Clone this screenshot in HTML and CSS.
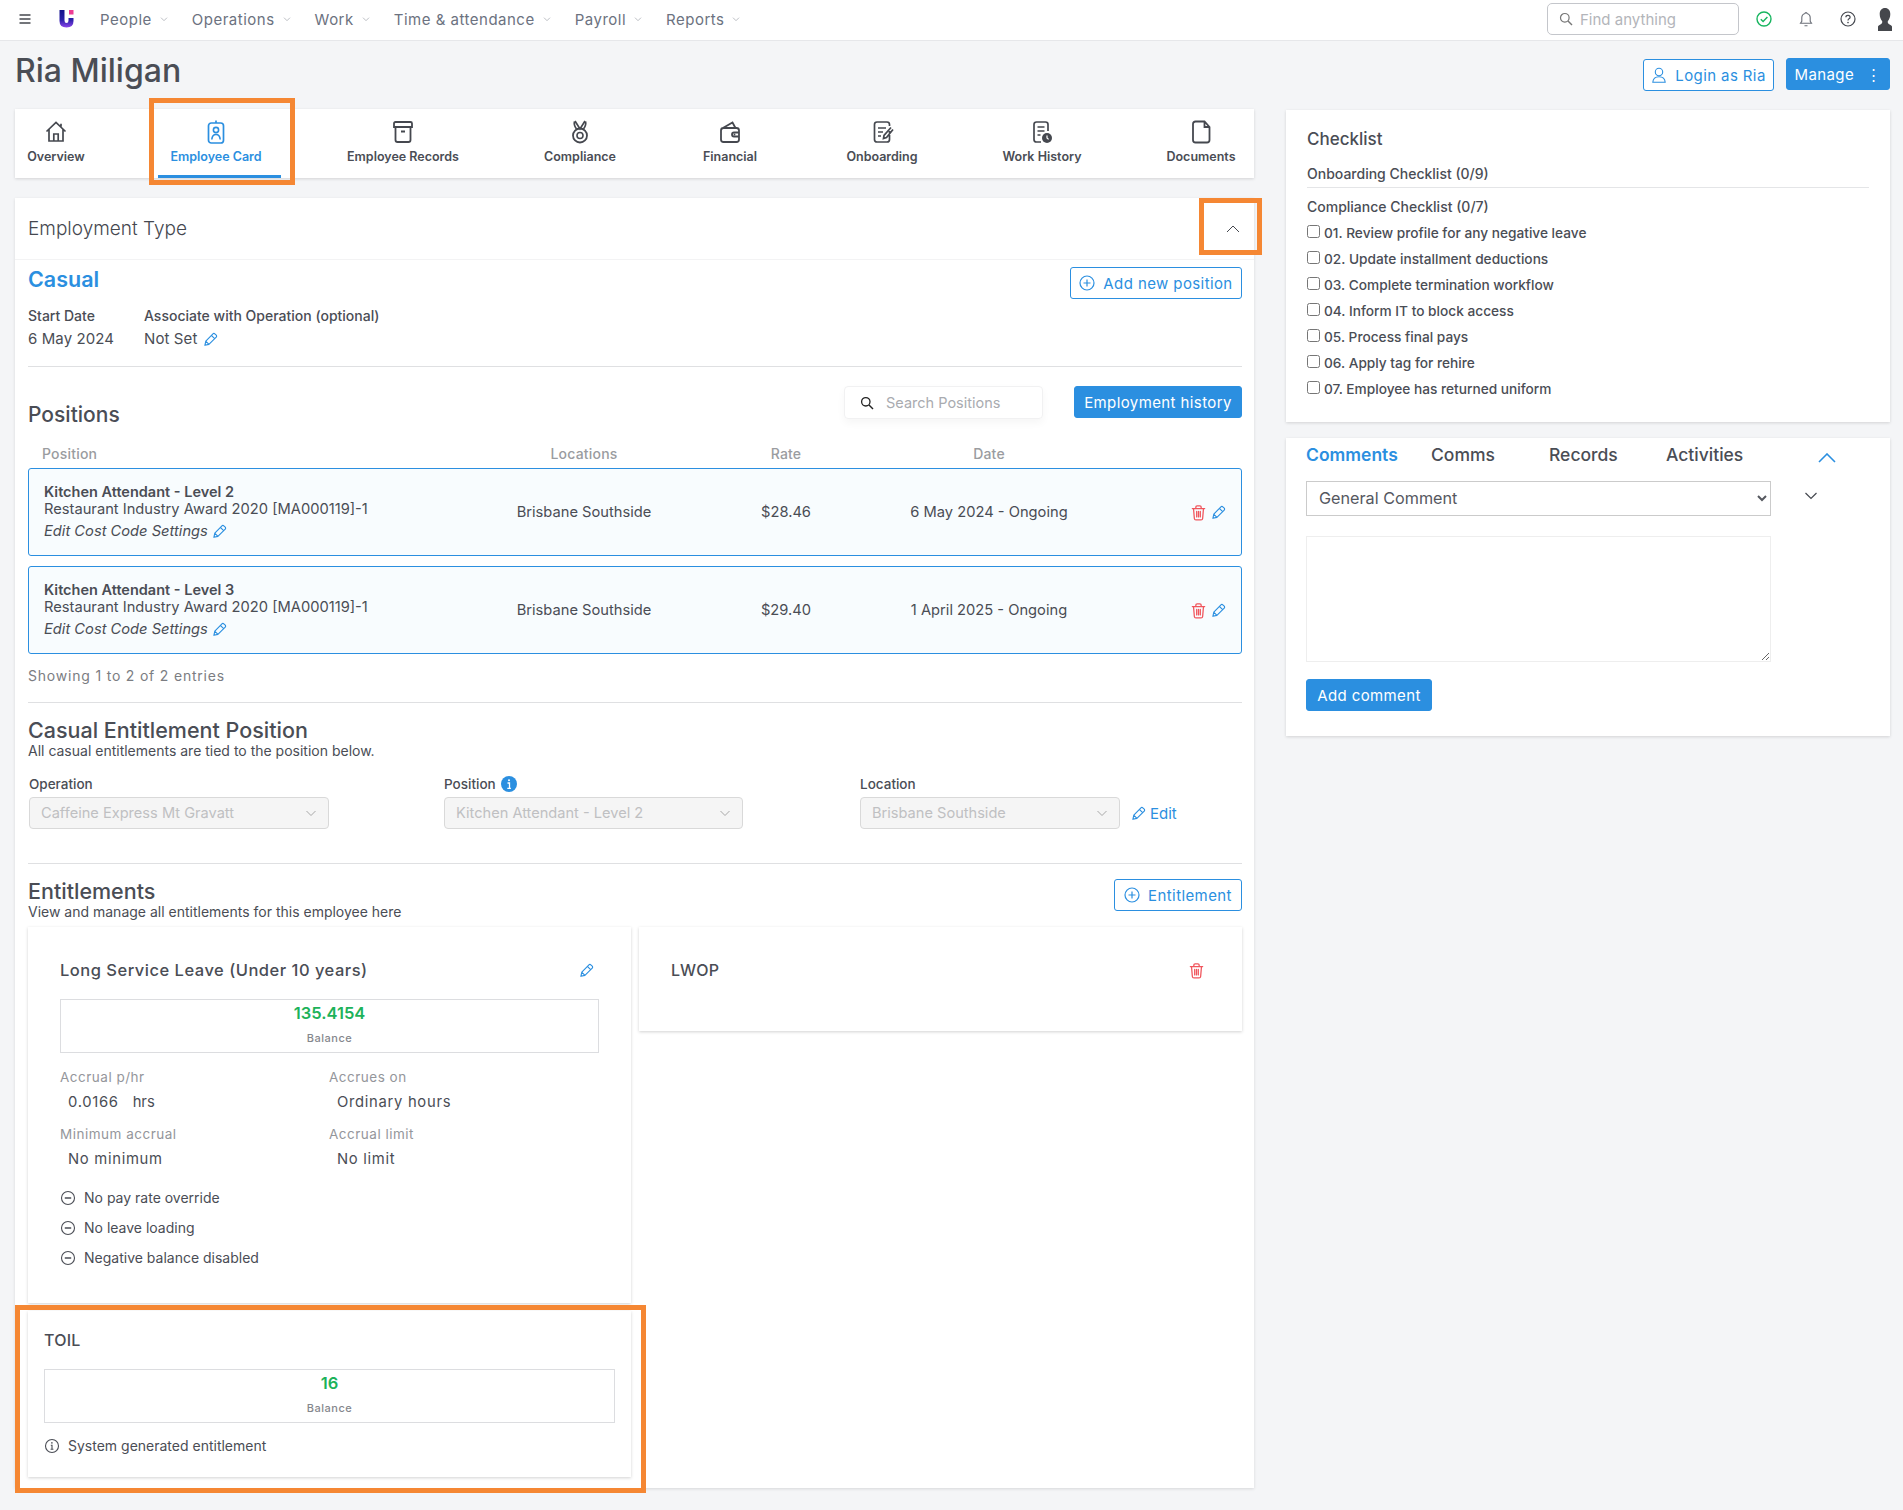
FILE: index.html
```html
<!DOCTYPE html>
<html lang="en">
<head>
    <meta charset="UTF-8">
    <meta name="viewport" content="width=device-width, initial-scale=1.0">
    <title>Ria Miligan</title>
    <link rel="stylesheet" href="styles.css">
</head>
<body>
    <svg class="defs" aria-hidden="true">
        <symbol id="pencil" viewBox="0 0 16 16"><path d="M10.6 1.900a1.400 1.400 0 0 1 2 0l1.500 1.500a1.400 1.400 0 0 1 0 2l-7.800 7.800-4.300 1 1-4.500z M8.900 3.600l3.500 3.500 M3.100 9.900l3 3" fill="none" stroke="currentColor" stroke-width="1.200" stroke-linejoin="round"/></symbol>
        <symbol id="trash" viewBox="0 0 16 16"><path d="M2.200 4.300h11.600 M5.500 4.200V2.900q0-1.200 1.200-1.200h2.600q1.200 0 1.200 1.200v1.300 M3.300 4.300l.8 9.300q.1 1.400 1.500 1.400h4.800q1.400 0 1.500-1.400l.8-9.300 M6.300 7v5.200 M8 7v5.200 M9.700 7v5.200" fill="none" stroke="currentColor" stroke-width="1.200" stroke-linecap="round"/></symbol>
        <symbol id="plus-circle" viewBox="0 0 16 16"><circle cx="8" cy="8" r="7" fill="none" stroke="currentColor" stroke-width="1.200"/><path d="M8 4.500v7 M4.500 8h7" fill="none" stroke="currentColor" stroke-width="1.200"/></symbol>
        <symbol id="minus-circle" viewBox="0 0 16 16"><circle cx="8" cy="8" r="6.500" fill="none" stroke="currentColor" stroke-width="1.100"/><path d="M4.800 8h6.400" fill="none" stroke="currentColor" stroke-width="1.500"/></symbol>
        <symbol id="info-circle" viewBox="0 0 16 16"><circle cx="8" cy="8" r="6.500" fill="none" stroke="currentColor" stroke-width="1.100"/><path d="M6.800 7.300H8v4 M6.600 11.300h2.800" fill="none" stroke="currentColor" stroke-width="1.100"/><circle cx="7.900" cy="4.900" r=".8" fill="currentColor"/></symbol>
        <symbol id="chevron" viewBox="0 0 12 12"><path d="M1.500 4l4.500 4.500L10.500 4" fill="none" stroke="currentColor" stroke-width="1"/></symbol>
    </svg>

    <header class="topbar">
        <svg class="burger" viewBox="0 0 14 12"><path d="M1.500 2h11 M1.500 6h11 M1.500 10h11" stroke="#45484f" stroke-width="1.600" fill="none"/></svg>
        <svg class="logo" viewBox="0 0 15 18">
            <defs><linearGradient id="logo-grad" x1="0" y1="0" x2="0" y2="1"><stop offset="0" stop-color="#12128a"/><stop offset=".55" stop-color="#2a1fa8"/><stop offset="1" stop-color="#8b45ea"/></linearGradient></defs>
            <path d="M.5 0h5v10.500q0 2.500 2 2.500t2-2.500V8h5v3q0 6.500-7 6.500t-7-6.500z" fill="url(#logo-grad)"/>
            <rect x="10" y="0" width="4.500" height="4.500" fill="#ee3c93"/>
        </svg>
        <nav class="mainnav">
            <a class="nav-item">People <svg class="nav-arrow"><use href="#chevron"/></svg></a>
            <a class="nav-item">Operations <svg class="nav-arrow"><use href="#chevron"/></svg></a>
            <a class="nav-item">Work <svg class="nav-arrow"><use href="#chevron"/></svg></a>
            <a class="nav-item">Time &amp; attendance <svg class="nav-arrow"><use href="#chevron"/></svg></a>
            <a class="nav-item">Payroll <svg class="nav-arrow"><use href="#chevron"/></svg></a>
            <a class="nav-item">Reports <svg class="nav-arrow"><use href="#chevron"/></svg></a>
        </nav>
        <div class="top-right">
            <div class="find-box">
                <svg class="find-icon" viewBox="0 0 14 14"><circle cx="5.800" cy="5.800" r="4.300" fill="none" stroke="#777" stroke-width="1.200"/><path d="M9 9l4 4" stroke="#777" stroke-width="1.400"/></svg>
                <span>Find anything</span>
            </div>
            <svg class="status-icon" viewBox="0 0 16 16"><circle cx="8" cy="8" r="7" fill="none" stroke="#17b55f" stroke-width="1.400"/><path d="M4.800 8.200l2.300 2.300 4.300-4.600" fill="none" stroke="#17b55f" stroke-width="1.400"/></svg>
            <svg class="status-icon gap-wide" viewBox="0 0 16 16"><path d="M8 1.500a1 1 0 0 1 1 1q3.200.8 3.200 4.300v3.500l1.300 2H2.500l1.300-2V6.800Q3.800 3.300 7 2.500a1 1 0 0 1 1-1z M6.500 14.700h3" fill="none" stroke="#6b6f78" stroke-width="1.100"/></svg>
            <svg class="status-icon gap-wide" viewBox="0 0 16 16"><circle cx="8" cy="8" r="7" fill="none" stroke="#45484f" stroke-width="1.200"/><path d="M5.900 6.300q0-2 2.100-2t2.100 1.900q0 1-1.100 1.600-1 .6-1 1.600" fill="none" stroke="#45484f" stroke-width="1.200"/><circle cx="8" cy="11.600" r=".8" fill="#45484f"/></svg>
            <svg class="avatar" viewBox="0 0 14 23"><path d="M7 0c3.300 0 5.300 2.500 5.300 6 0 3-1 5.500-2.500 7.200-.4 1.500.4 2.700 2.200 3.500 1.300.6 2 1.200 2 2V23H0v-4.300c0-.8.700-1.400 2-2 1.800-.8 2.600-2 2.200-3.500C2.700 11.500 1.700 9 1.700 6 1.700 2.500 3.700 0 7 0z" fill="#45474c"/></svg>
        </div>
    </header>

    <div class="page">
        <div class="title-row">
            <h1>Ria Miligan</h1>
            <div class="title-actions">
                <button class="btn btn-outline btn-login">
                    <svg class="btn-icon" viewBox="0 0 16 16"><circle cx="8" cy="5" r="3.700" fill="none" stroke="currentColor" stroke-width="1.100"/><path d="M1.800 15.200q.4-5.500 6.200-5.500t6.200 5.500z" fill="none" stroke="currentColor" stroke-width="1.100"/></svg>
                    Login as Ria
                </button>
                <button class="btn btn-solid btn-manage">Manage <span class="dots">&#8942;</span></button>
            </div>
        </div>

        <div class="columns">
            <main class="main-col">
                <div class="tabs">
                    <a class="tab tab-1">
                        <svg viewBox="0 0 24 24"><path d="M2.500 11.500L12 2.500l9.500 9 M5 9.500V21h14V9.500 M9.800 21v-7h4.400v7 M17 6.500V3.800" fill="none" stroke="#45484f" stroke-width="1.700"/></svg>
                        <span>Overview</span>
                    </a>
                    <a class="tab tab-2 active">
                        <svg viewBox="0 0 24 24"><rect x="4.500" y="3" width="15" height="20" rx="2.800" fill="none" stroke="#2b8fe0" stroke-width="1.700"/><path d="M12 .5V3" stroke="#2b8fe0" stroke-width="1.700"/><circle cx="12" cy="10" r="2.600" fill="none" stroke="#2b8fe0" stroke-width="1.600"/><path d="M7.800 19.500q.4-5 4.200-5t4.200 5" fill="none" stroke="#2b8fe0" stroke-width="1.600"/></svg>
                        <span>Employee Card</span>
                    </a>
                    <a class="tab tab-3">
                        <svg viewBox="0 0 24 24"><path d="M3 3.500q0-1.500 1.500-1.500h15Q21 2 21 3.500V7H3z M4.500 7v13q0 2 2 2h11q2 0 2-2V7 M10 11.500h4" fill="none" stroke="#45484f" stroke-width="1.800"/></svg>
                        <span>Employee Records</span>
                    </a>
                    <a class="tab tab-4">
                        <svg viewBox="0 0 24 24"><path d="M7 1l5 8 5-8 M6.500 1.500q-1 3.500 2 7.500 M17.500 1.500q1 3.500-2 7.500" fill="none" stroke="#45484f" stroke-width="1.700"/><circle cx="12" cy="15.500" r="7" fill="none" stroke="#45484f" stroke-width="1.800"/><circle cx="12" cy="15.500" r="3" fill="none" stroke="#45484f" stroke-width="1.600"/></svg>
                        <span>Compliance</span>
                    </a>
                    <a class="tab tab-5">
                        <svg viewBox="0 0 24 24"><path d="M3 10.500Q3 8 5.500 8h13Q21 8 21 10.500v9q0 2.500-2.500 2.500h-13Q3 22 3 19.500z M4 8.500l10.500-6 3 5.500 M21 12.500h-5q-2 0-2 2t2 2h5" fill="none" stroke="#45484f" stroke-width="1.800"/><circle cx="16.500" cy="14.500" r=".9" fill="#45484f"/></svg>
                        <span>Financial</span>
                    </a>
                    <a class="tab tab-6">
                        <svg viewBox="0 0 24 24"><path d="M19.500 11v8.500q0 2.500-2.500 2.500H7q-2.500 0-2.500-2.500v-15Q4.500 2 7 2h10q2.500 0 2.500 2.500V6 M8 8h8 M8 12h5 M8 16h3 M21 7.500l-7 8-.5 3 3-1 6.500-8" fill="none" stroke="#45484f" stroke-width="1.700"/></svg>
                        <span>Onboarding</span>
                    </a>
                    <a class="tab tab-7">
                        <svg viewBox="0 0 24 24"><path d="M18 11V4.500Q18 2 15.500 2h-9Q4 2 4 4.500v15Q4 22 6.500 22H11 M7.500 7h7 M7.500 11h7 M7.500 15h3" fill="none" stroke="#45484f" stroke-width="1.700"/><circle cx="17" cy="18" r="5" fill="#45484f"/><path d="M17 15.500V18l1.600 1.400" fill="none" stroke="#fff" stroke-width="1.200"/></svg>
                        <span>Work History</span>
                    </a>
                    <a class="tab tab-8">
                        <svg viewBox="0 0 24 24"><path d="M6.500 1.500h9l5 5.500v13q0 2.500-2.500 2.500H6.500Q4 22.500 4 20V4q0-2.500 2.500-2.500z M15.500 1.500V7h5" fill="none" stroke="#45484f" stroke-width="1.800"/></svg>
                        <span>Documents</span>
                    </a>
                </div>

                <section class="main-card">
                    <div class="card-head">
                        <h2 class="card-head-title">Employment Type</h2>
                        <svg class="head-chevron" viewBox="0 0 14 8"><path d="M1 7l6-6 6 6" fill="none" stroke="#45484f" stroke-width="1"/></svg>
                    </div>
                    <div class="card-body">
                        <div class="casual-row">
                            <div class="casual-title">Casual</div>
                            <button class="btn btn-outline btn-add"><svg class="btn-icon"><use href="#plus-circle"/></svg>Add new position</button>
                        </div>
                        <div class="meta-row">
                            <div class="meta-start">
                                <div class="meta-label">Start Date</div>
                                <div class="meta-value">6 May 2024</div>
                            </div>
                            <div>
                                <div class="meta-label">Associate with Operation (optional)</div>
                                <div class="meta-value">Not Set <svg class="pencil"><use href="#pencil"/></svg></div>
                            </div>
                        </div>
                        <hr class="rule rule-meta">

                        <div class="positions-head">
                            <h3 class="section-title positions-title">Positions</h3>
                            <div class="positions-tools">
                                <div class="search-box">
                                    <svg class="search-icon" viewBox="0 0 14 14"><circle cx="5.800" cy="5.800" r="4.200" fill="none" stroke="#222" stroke-width="1.300"/><path d="M9 9l4 4" stroke="#222" stroke-width="1.500"/></svg>
                                    <span>Search Positions</span>
                                </div>
                                <button class="btn btn-solid btn-history">Employment history</button>
                            </div>
                        </div>

                        <div class="pos-grid pos-header">
                            <div>Position</div>
                            <div class="cell-center">Locations</div>
                            <div class="cell-center">Rate</div>
                            <div class="cell-center">Date</div>
                            <div></div>
                        </div>
                        <div class="pos-grid pos-row">
                            <div class="pos-name">
                                <div class="pos-title">Kitchen Attendant - Level 2</div>
                                <div class="pos-award">Restaurant Industry Award 2020 [MA000119]-1</div>
                                <div class="pos-edit">Edit Cost Code Settings <svg class="pencil"><use href="#pencil"/></svg></div>
                            </div>
                            <div class="cell-center">Brisbane Southside</div>
                            <div class="cell-center">$28.46</div>
                            <div class="cell-center">6 May 2024 - Ongoing</div>
                            <div class="pos-actions"><svg class="trash"><use href="#trash"/></svg><svg class="pencil"><use href="#pencil"/></svg></div>
                        </div>
                        <div class="pos-grid pos-row">
                            <div class="pos-name">
                                <div class="pos-title">Kitchen Attendant - Level 3</div>
                                <div class="pos-award">Restaurant Industry Award 2020 [MA000119]-1</div>
                                <div class="pos-edit">Edit Cost Code Settings <svg class="pencil"><use href="#pencil"/></svg></div>
                            </div>
                            <div class="cell-center">Brisbane Southside</div>
                            <div class="cell-center">$29.40</div>
                            <div class="cell-center">1 April 2025 - Ongoing</div>
                            <div class="pos-actions"><svg class="trash"><use href="#trash"/></svg><svg class="pencil"><use href="#pencil"/></svg></div>
                        </div>
                        <div class="showing">Showing 1 to 2 of 2 entries</div>
                        <hr class="rule rule-showing">

                        <h3 class="section-title casual-ent-title">Casual Entitlement Position</h3>
                        <p class="section-sub">All casual entitlements are tied to the position below.</p>
                        <div class="ent-form">
                            <div class="field field-op">
                                <label class="field-label">Operation</label>
                                <div class="fake-select"><span>Caffeine Express Mt Gravatt</span><svg><use href="#chevron"/></svg></div>
                            </div>
                            <div class="field field-pos">
                                <label class="field-label">Position <svg class="info-dot" viewBox="0 0 16 16"><circle cx="8" cy="8" r="8" fill="#2b8fe0"/><path d="M6.500 7h2v5 M6.300 12.300h3.600" fill="none" stroke="#fff" stroke-width="1.300"/><circle cx="8" cy="4.300" r="1" fill="#fff"/></svg></label>
                                <div class="fake-select"><span>Kitchen Attendant - Level 2</span><svg><use href="#chevron"/></svg></div>
                            </div>
                            <div class="field field-loc">
                                <label class="field-label">Location</label>
                                <div class="fake-select"><span>Brisbane Southside</span><svg><use href="#chevron"/></svg></div>
                            </div>
                            <a class="edit-link"><svg class="pencil"><use href="#pencil"/></svg>Edit</a>
                        </div>
                        <hr class="rule rule-form">

                        <div class="ent-head">
                            <div>
                                <h3 class="section-title">Entitlements</h3>
                                <p class="section-sub">View and manage all entitlements for this employee here</p>
                            </div>
                            <button class="btn btn-outline btn-ent"><svg class="btn-icon"><use href="#plus-circle"/></svg>Entitlement</button>
                        </div>

                        <div class="ent-grid">
                            <div class="ent-stack">
                                <div class="ent-card ent-long">
                                    <div class="ent-title-row">
                                        <h4 class="ent-title">Long Service Leave (Under 10 years)</h4>
                                        <svg class="pencil"><use href="#pencil"/></svg>
                                    </div>
                                    <div class="balance-box">
                                        <div class="balance-num">135.4154</div>
                                        <div class="balance-label">Balance</div>
                                    </div>
                                    <div class="ent-fields">
                                        <div>
                                            <div class="ent-label">Accrual p/hr</div>
                                            <div class="ent-value">0.0166 <span class="unit">hrs</span></div>
                                        </div>
                                        <div>
                                            <div class="ent-label">Accrues on</div>
                                            <div class="ent-value">Ordinary hours</div>
                                        </div>
                                        <div>
                                            <div class="ent-label">Minimum accrual</div>
                                            <div class="ent-value">No minimum</div>
                                        </div>
                                        <div>
                                            <div class="ent-label">Accrual limit</div>
                                            <div class="ent-value">No limit</div>
                                        </div>
                                    </div>
                                    <ul class="ent-notes">
                                        <li><svg><use href="#minus-circle"/></svg>No pay rate override</li>
                                        <li><svg><use href="#minus-circle"/></svg>No leave loading</li>
                                        <li><svg><use href="#minus-circle"/></svg>Negative balance disabled</li>
                                    </ul>
                                </div>
                                <div class="ent-card ent-toil">
                                    <h4 class="ent-title ent-title-short">TOIL</h4>
                                    <div class="balance-box">
                                        <div class="balance-num">16</div>
                                        <div class="balance-label">Balance</div>
                                    </div>
                                    <ul class="ent-notes">
                                        <li><svg><use href="#info-circle"/></svg>System generated entitlement</li>
                                    </ul>
                                </div>
                            </div>
                            <div class="ent-card ent-lwop">
                                <div class="ent-title-row">
                                    <h4 class="ent-title ent-title-short">LWOP</h4>
                                    <svg class="trash"><use href="#trash"/></svg>
                                </div>
                            </div>
                        </div>
                    </div>
                </section>
            </main>

            <aside class="side-col">
                <section class="side-card checklist">
                    <h3 class="checklist-title">Checklist</h3>
                    <div class="checklist-group">Onboarding Checklist (0/9)</div>
                    <hr class="rule rule-check">
                    <div class="checklist-group group-2">Compliance Checklist (0/7)</div>
                    <ul class="check-items">
                        <li><input type="checkbox"><span>01. Review profile for any negative leave</span></li>
                        <li><input type="checkbox"><span>02. Update installment deductions</span></li>
                        <li><input type="checkbox"><span>03. Complete termination workflow</span></li>
                        <li><input type="checkbox"><span>04. Inform IT to block access</span></li>
                        <li><input type="checkbox"><span>05. Process final pays</span></li>
                        <li><input type="checkbox"><span>06. Apply tag for rehire</span></li>
                        <li><input type="checkbox"><span>07. Employee has returned uniform</span></li>
                    </ul>
                </section>

                <section class="side-card comments">
                    <div class="comment-tabs">
                        <a class="comment-tab active">Comments</a>
                        <a class="comment-tab">Comms</a>
                        <a class="comment-tab">Records</a>
                        <a class="comment-tab">Activities</a>
                        <svg class="comment-up" viewBox="0 0 18 10"><path d="M1 9l8-8 8 8" fill="none" stroke="#2b8fe0" stroke-width="1.600"/></svg>
                    </div>
                    <div class="comment-select-row">
                        <select class="comment-select"><option>General Comment</option></select>
                        <svg class="comment-down" viewBox="0 0 14 8"><path d="M1.500 1l5.500 5.500L12.500 1" fill="none" stroke="#45484f" stroke-width="1.200"/></svg>
                    </div>
                    <textarea class="comment-text"></textarea>
                    <button class="btn btn-solid btn-comment">Add comment</button>
                </section>
            </aside>
        </div>
    </div>

    <div class="mark mark-tab"></div>
    <div class="mark mark-chevron"></div>
    <div class="mark mark-toil"></div>
</body>
</html>
```

FILE: styles.css
```css
* {
    box-sizing: border-box;
}
html, body {
    margin: 0;
    padding: 0;
}
body {
    position: relative;
    min-height: 1510px;
    font-family: Inter, "Noto Sans", sans-serif;
    font-size: 14px;
    color: #4a4d55;
    background-color: #f4f5f7;
}
h1, h2, h3, h4, p, ul {
    margin: 0;
    padding: 0;
}
ul {
    list-style: none;
}
svg {
    display: block;
    flex: none;
}
.defs {
    display: none;
}

/* top bar */
.topbar {
    display: flex;
    align-items: center;
    height: 41px;
    padding: 0 7px 2px 18px;
    background: #fff;
    border-bottom: 1px solid #e6e7ea;
}
.burger {
    width: 14px;
    height: 12px;
}
.logo {
    width: 15px;
    height: 18px;
    margin-left: 27px;
}
.mainnav {
    display: flex;
    margin-left: 26px;
    gap: 24px;
}
.nav-item {
    display: flex;
    align-items: center;
    gap: 8px;
    font-size: 15px;
    letter-spacing: .5px;
    color: #6c7280;
    white-space: nowrap;
}
.nav-arrow {
    width: 8px;
    height: 8px;
    color: #9a9ea6;
}
.top-right {
    display: flex;
    align-items: center;
    margin-left: auto;
}
.find-box {
    display: flex;
    align-items: center;
    gap: 7px;
    width: 192px;
    height: 32px;
    padding-left: 11px;
    border: 1px solid #c4c6cb;
    border-radius: 5px;
    font-size: 15px;
    color: #b3b5ba;
}
.find-icon {
    width: 14px;
    height: 14px;
}
.status-icon {
    width: 16px;
    height: 16px;
    margin-left: 17px;
}
.gap-wide {
    margin-left: 26px;
}
.avatar {
    width: 14px;
    height: 23px;
    margin: 0 4px 0 22px;
}

/* page */
.page {
    padding: 0 13px 0 15px;
}
.title-row {
    display: flex;
    justify-content: space-between;
    align-items: flex-start;
    height: 68px;
}
.title-row h1 {
    margin-top: 8px;
    font-size: 32px;
    line-height: 44px;
    font-weight: 500;
}
.title-actions {
    display: flex;
    gap: 12px;
    margin-top: 17px;
}
.columns {
    display: grid;
    grid-template-columns: 1239px 604px;
    column-gap: 32px;
    align-items: start;
}

/* buttons */
.btn {
    display: inline-flex;
    align-items: center;
    justify-content: center;
    height: 32px;
    padding: 0;
    border-radius: 3px;
    font-family: inherit;
    font-size: 15px;
    letter-spacing: .4px;
    cursor: pointer;
    white-space: nowrap;
}
.btn-outline {
    background: #fff;
    border: 1px solid #2b8fe0;
    color: #2b8fe0;
}
.btn-solid {
    background: #2b8fe0;
    border: 1px solid #2b8fe0;
    color: #fff;
}
.btn-icon {
    width: 16px;
    height: 16px;
    margin-right: 8px;
}
.btn-login {
    width: 131px;
    margin-top: 1px;
}
.btn-manage {
    width: 104px;
}
.dots {
    margin-left: 12px;
    font-size: 15px;
}
.btn-add {
    width: 172px;
}
.btn-history {
    width: 168px;
}
.btn-ent {
    width: 128px;
}
.btn-comment {
    width: 126px;
    margin-top: 17px;
}

/* tabs */
.tabs {
    display: flex;
    gap: 60px;
    height: 69px;
    margin-bottom: 20px;
    background: #fff;
    box-shadow: 0 1px 3px rgba(0, 0, 0, .14);
}
.tab {
    position: relative;
    display: flex;
    flex-direction: column;
    align-items: center;
    padding-top: 11px;
    font-size: 12.500px;
    font-weight: 600;
    color: #4a4d55;
    white-space: nowrap;
}
.tab svg {
    width: 24px;
    height: 24px;
}
.tab span {
    margin-top: 4px;
    line-height: 18px;
}
.tab.active {
    color: #2b8fe0;
}
.tab.active::after {
    content: "";
    position: absolute;
    left: 1px;
    right: -6px;
    bottom: 0;
    height: 3px;
    background: #2b8fe0;
}
.tab-1 { width: 82px; }
.tab-2 { width: 118px; }
.tab-3 { width: 136px; }
.tab-4 { width: 98px; }
.tab-5 { width: 82px; }
.tab-6 { width: 102px; }
.tab-7 { width: 98px; }
.tab-8 { width: 100px; }

/* main card */
.main-card {
    background: #fff;
    box-shadow: 0 1px 3px rgba(0, 0, 0, .12);
}
.card-head {
    display: flex;
    justify-content: space-between;
    align-items: center;
    height: 62px;
    padding: 0 14px 0 13px;
    border-bottom: 1px solid #f3f3f4;
}
.card-head-title {
    font-size: 19px;
    font-weight: 300;
    color: #45484f;
}
.head-chevron {
    width: 14px;
    height: 8px;
}
.card-body {
    padding: 0 12px 11px 13px;
}
.casual-row {
    display: flex;
    justify-content: space-between;
    padding-top: 7px;
}
.casual-title {
    font-size: 21.500px;
    line-height: 24px;
    font-weight: 600;
    color: #2b8fe0;
}
.meta-row {
    display: flex;
    margin-top: 7px;
}
.meta-start {
    width: 116px;
}
.meta-label {
    font-size: 14px;
    line-height: 20px;
    font-weight: 500;
}
.meta-value {
    display: flex;
    align-items: center;
    gap: 6px;
    margin-top: 1px;
    font-size: 15px;
    line-height: 24px;
    letter-spacing: .1px;
}
.pencil {
    width: 15px;
    height: 15px;
    color: #2b8fe0;
}
.trash {
    width: 17px;
    height: 17px;
    color: #f0555c;
}
.rule {
    height: 1px;
    margin: 0;
    border: 0;
    background: #dfe0e2;
}
.rule-meta {
    margin-top: 15px;
}
.section-title {
    font-size: 21.500px;
    line-height: 24px;
    font-weight: 500;
    color: #4a4d55;
}
.section-sub {
    font-size: 14px;
    line-height: 18px;
}

/* positions */
.positions-head {
    display: flex;
    justify-content: space-between;
    align-items: flex-start;
    height: 63px;
    padding-top: 19px;
}
.positions-title {
    margin-top: 17px;
    font-size: 21px;
}
.positions-tools {
    display: flex;
    gap: 31px;
    align-items: flex-start;
}
.search-box {
    display: flex;
    align-items: center;
    gap: 12px;
    width: 199px;
    height: 33px;
    padding-left: 15px;
    border: 1px solid #f1f1f2;
    border-radius: 4px;
    box-shadow: 0 4px 8px rgba(0, 0, 0, .04);
    font-size: 14.500px;
    color: #a9abb0;
}
.search-icon {
    width: 14px;
    height: 14px;
}
.pos-grid {
    display: grid;
    align-items: center;
}
.pos-header {
    height: 20px;
    margin-top: 13px;
    padding-left: 14px;
    grid-template-columns: 438px 208px 196px 210px 1fr;
    font-weight: 500;
    color: #9a9ca0;
    letter-spacing: .2px;
}
.pos-row {
    height: 88px;
    margin-top: 10px;
    padding-left: 15px;
    grid-template-columns: 436px 208px 196px 210px 1fr;
    font-size: 14.700px;
    background: #f8fcfe;
    border: 1px solid #2b8fe0;
    border-radius: 3px;
}
.pos-header + .pos-row {
    margin-top: 5px;
}
.cell-center {
    text-align: center;
}
.pos-name {
    line-height: 17px;
}
.pos-title {
    margin: -1px 0 1px;
    font-weight: 600;
    font-size: 14.500px;
}
.pos-edit {
    display: flex;
    align-items: center;
    gap: 4px;
    margin-top: 5px;
    font-style: italic;
}
.pos-actions {
    display: flex;
    justify-content: flex-end;
    align-items: center;
    gap: 4px;
    padding-right: 15px;
}
.showing {
    margin-top: 12px;
    line-height: 20px;
    letter-spacing: .8px;
    color: #7b7d82;
}
.rule-showing {
    margin-top: 16px;
}

/* entitlement position form */
.casual-ent-title {
    margin-top: 15px;
}
.ent-form {
    display: flex;
    align-items: flex-end;
    margin-top: 15px;
    padding-left: 1px;
}
.field-label {
    display: flex;
    align-items: center;
    gap: 5px;
    height: 18px;
    margin-bottom: 4px;
    font-size: 13.500px;
    font-weight: 500;
}
.info-dot {
    width: 16px;
    height: 16px;
}
.field-op {
    width: 300px;
    margin-right: 115px;
}
.field-pos {
    width: 299px;
    margin-right: 117px;
}
.field-loc {
    width: 260px;
}
.fake-select {
    display: flex;
    justify-content: space-between;
    align-items: center;
    height: 32px;
    padding: 0 11px;
    background: #f5f5f5;
    border: 1px solid #d9d9d9;
    border-radius: 4px;
    font-size: 14.600px;
    color: #bfc0c2;
}
.fake-select svg {
    width: 12px;
    height: 12px;
    color: #a8a8a8;
}
.edit-link {
    display: flex;
    align-items: center;
    gap: 4px;
    height: 32px;
    margin-left: 11px;
    font-size: 15px;
    color: #2b8fe0;
}
.rule-form {
    margin-top: 34px;
}
.ent-head {
    display: flex;
    justify-content: space-between;
    align-items: flex-start;
    padding-top: 15px;
}

/* entitlement cards */
.ent-grid {
    display: grid;
    grid-template-columns: 603px 603px;
    column-gap: 8px;
    align-items: start;
    margin-top: 6px;
}
.ent-stack {
    display: flex;
    flex-direction: column;
    gap: 8px;
}
.ent-card {
    background: #fff;
    box-shadow: 0 1px 3px rgba(0, 0, 0, .18);
}
.ent-long {
    padding: 30px 32px 36px;
}
.ent-toil {
    padding: 16px 16px 22px;
}
.ent-lwop {
    height: 104px;
    padding: 30px 37px 0 32px;
}
.ent-title-row {
    display: flex;
    justify-content: space-between;
    align-items: center;
}
.ent-long .ent-title-row {
    padding-right: 5px;
}
.ent-title {
    font-size: 16.500px;
    line-height: 26px;
    font-weight: 500;
    letter-spacing: .5px;
}
.ent-title-short {
    font-size: 16px;
    letter-spacing: .2px;
}
.balance-box {
    height: 54px;
    margin-top: 16px;
    padding-top: 3px;
    border: 1px solid #dcdde0;
    text-align: center;
}
.balance-num {
    font-size: 16.500px;
    line-height: 20px;
    font-weight: 600;
    color: #1db25a;
}
.balance-label {
    margin-top: 7px;
    font-size: 11px;
    line-height: 16px;
    font-weight: 500;
    letter-spacing: .5px;
    color: #85878d;
}
.ent-fields {
    display: grid;
    grid-template-columns: 269px 1fr;
    row-gap: 12px;
    margin-top: 15px;
}
.ent-label {
    font-size: 13.500px;
    line-height: 18px;
    letter-spacing: .5px;
    color: #94969b;
}
.ent-value {
    margin-top: 5px;
    padding-left: 8px;
    font-size: 14.800px;
    line-height: 22px;
    letter-spacing: .7px;
}
.unit {
    margin-left: 9px;
    letter-spacing: 0;
}
.ent-notes {
    margin-top: 17px;
}
.ent-notes li {
    display: flex;
    align-items: center;
    gap: 8px;
    height: 20px;
    margin-bottom: 10px;
    font-size: 14px;
}
.ent-notes svg {
    width: 16px;
    height: 16px;
    margin-top: 2px;
}
.ent-long .ent-notes {
    margin-bottom: -10px;
}
.ent-toil .ent-notes {
    margin-top: 12px;
    margin-bottom: -10px;
}

/* right column */
.side-col {
    display: flex;
    flex-direction: column;
    gap: 16px;
    padding-top: 1px;
}
.side-card {
    background: #fff;
    box-shadow: 0 1px 3px rgba(0, 0, 0, .14);
}
.checklist {
    height: 312px;
    padding: 17px 21px 0 21px;
}
.checklist-title {
    font-size: 17px;
    line-height: 24px;
    font-weight: 500;
}
.checklist-group {
    margin-top: 13px;
    font-size: 14px;
    line-height: 20px;
    font-weight: 500;
}
.group-2 {
    margin-top: 9px;
}
.rule-check {
    margin-top: 3px;
    background: #e4e5e7;
}
.check-items {
    margin-top: 3px;
}
.check-items li {
    display: flex;
    align-items: center;
    height: 26px;
    font-size: 13.700px;
    font-weight: 500;
}
.check-items input {
    width: 13px;
    height: 13px;
    margin: -3px 4px 0 0;
}
.comments {
    height: 298px;
    padding: 4px 0 0 20px;
}
.comment-tabs {
    display: grid;
    grid-template-columns: 125px 118px 117px 152px 18px;
    align-items: center;
    height: 24px;
}
.comment-tab {
    font-size: 17.500px;
    font-weight: 500;
    color: #4a4d55;
}
.comment-tab.active {
    font-weight: 600;
    color: #2b8fe0;
}
.comment-up {
    width: 18px;
    height: 10px;
    margin-top: 8px;
}
.comment-select-row {
    display: flex;
    align-items: center;
    margin-top: 15px;
}
.comment-select {
    width: 465px;
    height: 35px;
    padding: 0 0 2px 8px;
    background: #fff;
    border: 1px solid #cbcbcb;
    font-family: inherit;
    font-size: 16.200px;
    color: #55585f;
}
.comment-down {
    width: 14px;
    height: 8px;
    margin: -6px 0 0 33px;
}
.comment-text {
    display: block;
    width: 465px;
    height: 126px;
    margin-top: 20px;
    border: 1px solid #eeeeee;
    outline: none;
}

/* orange callouts from the annotated screenshot */
.mark {
    position: absolute;
    border: 5px solid #f58733;
    pointer-events: none;
}
.mark-tab {
    left: 149px;
    top: 98px;
    width: 146px;
    height: 87px;
}
.mark-chevron {
    left: 1199px;
    top: 198px;
    width: 63px;
    height: 57px;
}
.mark-toil {
    left: 15px;
    top: 1305px;
    width: 631px;
    height: 188px;
}
```
